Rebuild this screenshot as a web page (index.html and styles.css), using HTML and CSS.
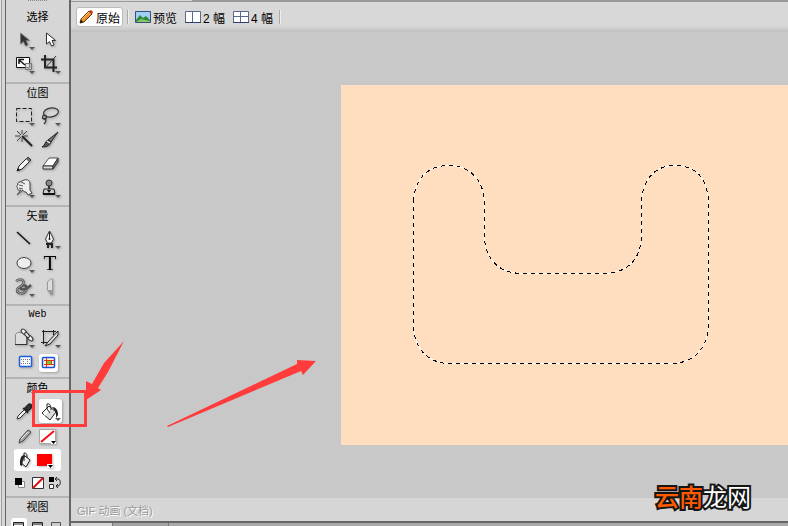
FILE: index.html
```
<!DOCTYPE html>
<html lang="zh">
<head>
    <meta charset="UTF-8">
    <meta name="viewport" content="width=device-width, initial-scale=1.0">
    <title>GIF 动画 (文档)</title>
    <link rel="stylesheet" href="styles.css">
</head>
<body>
    <div class="app">
        <!-- 工具面板 -->
        <aside class="palette">
            <div class="grip"></div>

            <section class="group">
                <h2>选择</h2>
                <div class="tools">
                    <button class="tool flyout" aria-label="指针"><svg viewBox="0 0 26 24"><path d="M9.500 5v11l3-2.500 2 4.500 2.500-1-2-4.500h3.500z" fill="#333" stroke="#777" stroke-width=".6"/></svg></button>
                    <button class="tool" aria-label="部分选定"><svg viewBox="0 0 26 24"><path d="M9.500 5v11l3-2.500 2 4.500 2.500-1-2-4.500h3.500z" fill="#fff" stroke="#333"/></svg></button>
                    <button class="tool flyout" aria-label="缩放"><svg viewBox="0 0 26 24"><path d="M5.500 5.500h13v10h-13z" fill="#fff" stroke="#111"/><path d="M14.500 11.500h6v6h-6z" fill="#ccc" fill-opacity=".6" stroke="#777"/><path d="M8 8l6 5M8 12V7.500h5" fill="none" stroke="#111" stroke-width="1.500"/></svg></button>
                    <button class="tool flyout" aria-label="裁剪"><svg viewBox="0 0 26 24"><path d="M8 3v12.500h12M4 7.500h12.500V20" fill="none" stroke="#222" stroke-width="2"/><path d="M8 16L19 4" stroke="#333"/></svg></button>
                </div>
            </section>

            <section class="group">
                <h2>位图</h2>
                <div class="tools">
                    <button class="tool flyout" aria-label="选取框"><svg viewBox="0 0 26 24"><path d="M5.500 4.500h15v13h-15z" fill="none" stroke="#222" stroke-dasharray="4 2"/></svg></button>
                    <button class="tool flyout" aria-label="套索"><svg viewBox="0 0 26 24"><g fill="none" stroke="#333" stroke-width="1.200"><ellipse cx="14" cy="8.500" rx="7.500" ry="4.500" transform="rotate(-10 14 8.500)"/><circle cx="7.500" cy="13" r="2"/><path d="M7 14c3 1 2 4 0 6M5 14l4 2"/></g></svg></button>
                    <button class="tool" aria-label="魔术棒"><svg viewBox="0 0 26 24"><path d="M11 2v4M11 10v4M4 8h5M13 8h4M6 3l4 4M16 3l-4 4M6 13l4-4" stroke="#444"/><path d="M11 8l10 10" stroke="#222" stroke-width="2"/></svg></button>
                    <button class="tool" aria-label="刷子"><svg viewBox="0 0 26 24"><path d="M21 4l-7 10-3-2z" fill="#777" stroke="#222"/><path d="M11 12l3 2c-1 4-5 5-9 5 3-1 3-6 6-7z" fill="#555" stroke="#222"/><path d="M10 13l3 2" stroke="#eee" stroke-width="1.500"/></svg></button>
                    <button class="tool" aria-label="铅笔"><svg viewBox="0 0 26 24"><path d="M6 19l2-5 9-9 3 3-9 9z" fill="#f4f4f4" stroke="#222"/><path d="M15 7l3 3 2-2-3-3z" fill="#666"/><path d="M6 19l1-3 2 2z" fill="#111"/></svg></button>
                    <button class="tool" aria-label="橡皮擦"><svg viewBox="0 0 26 24"><path d="M6 14l6-8h9l-5 8z" fill="#fff" stroke="#555"/><path d="M6 14h10v3H6z" fill="#ddd" stroke="#333"/><path d="M16 14l5-8v4l-5 7z" fill="#777" stroke="#333"/></svg></button>
                    <button class="tool flyout" aria-label="涂抹"><svg viewBox="0 0 26 24"><path d="M6 19l4-5c-3 1-4-1-3-2-2-1-1-3 0-3-1-2 0-3 2-3l4-2c4-1 6 1 6 4v6l2 3-4 2-2-3c-2 0-3-1-3-2z" fill="#eee" stroke="#444"/><path d="M8 9l4 1M8 12l4 1M10 6l4 2" stroke="#555"/></svg></button>
                    <button class="tool flyout" aria-label="橡皮图章"><svg viewBox="0 0 26 24"><circle cx="12" cy="7" r="3" fill="#888" stroke="#333"/><path d="M11 10h2v3h-2z" fill="#333"/><path d="M7 13h10l1 5H6z" fill="#ccc" stroke="#222"/><path d="M6 17h12v2H6z" fill="#111"/><path d="M10 14h4l-2 3z" fill="#111"/></svg></button>
                </div>
            </section>

            <section class="group">
                <h2>矢量</h2>
                <div class="tools">
                    <button class="tool" aria-label="直线"><svg viewBox="0 0 26 24"><path d="M6 5l13 12" stroke="#111" stroke-width="1.500"/></svg></button>
                    <button class="tool flyout" aria-label="钢笔"><svg viewBox="0 0 26 24"><path d="M12.500 4l4 8-2 4h-4l-2-4z" fill="#f2f2f2" stroke="#333"/><path d="M12.500 5v7" stroke="#222"/><circle cx="12.500" cy="12" r="1" fill="#222"/><path d="M9 16h7v2H9zM10 18h2v3h-2zM14 18h2v3h-2z" fill="#222"/></svg></button>
                    <button class="tool flyout" aria-label="椭圆"><svg viewBox="0 0 26 24"><ellipse cx="13" cy="12" rx="7" ry="5.500" fill="#eee" stroke="#444"/></svg></button>
                    <button class="tool letter" aria-label="文本">T</button>
                    <button class="tool flyout" aria-label="自由变形"><svg viewBox="0 0 26 24"><g fill="none" stroke="#555" stroke-width="2.500"><path d="M5 6c5-3 9-1 7 3-1 3-6 3-6 6 0 4 7 5 9 0s-3-6-5-3 4 4 10-2"/></g><path d="M5 6c5-3 9-1 7 3-1 3-6 3-6 6 0 4 7 5 9 0" fill="none" stroke="#bbb" stroke-width=".8"/></svg></button>
                    <button class="tool" aria-label="刀子" disabled><svg viewBox="0 0 26 24"><path d="M10.500 15V7l3-3h2v12h-4z" fill="#ddd" stroke="#999"/><path d="M11 15h5v5h-3z" fill="#999"/></svg></button>
                </div>
            </section>

            <section class="group web">
                <h2 class="latin">Web</h2>
                <div class="tools">
                    <button class="tool flyout" aria-label="热点"><svg viewBox="0 0 26 24"><path d="M4.500 8.500l2-2h9v12h-11z" fill="#ddd" stroke="#888"/><path d="M4 18.500h12V11" fill="none" stroke="#333"/><g fill="#eee" stroke="#333"><ellipse cx="13" cy="6" rx="3.500" ry="2" transform="rotate(45 13 6)"/><ellipse cx="19" cy="12" rx="3.500" ry="2" transform="rotate(45 19 12)"/><ellipse cx="16" cy="9" rx="3" ry="1.500" transform="rotate(45 16 9)"/></g></svg></button>
                    <button class="tool flyout" aria-label="切片"><svg viewBox="0 0 26 24"><path d="M5 5.500h14M6.500 4v14M4 16.500h10M16.500 4v5" fill="none" stroke="#222"/><path d="M21 5L11 16l-3 4 5-2 8-9z" fill="#ddd" stroke="#222"/></svg></button>
                    <button class="tool" aria-label="隐藏切片"><svg viewBox="0 0 26 24"><rect x="8.500" y="6.500" width="12" height="10" rx="1" fill="#fff" stroke="#1c5fe0" stroke-width="1.500"/><path d="M10 9.500h9M10 13.500h9M12.500 9v5M16.500 9v5" stroke="#777" stroke-dasharray="1 1"/></svg></button>
                    <button class="tool chosen" aria-label="显示切片"><svg viewBox="0 0 26 24"><rect x="5.500" y="7.500" width="12" height="10" rx="1" fill="#fff4d8" stroke="#1650e0" stroke-width="1.500"/><path d="M7 10.500h10M7 14.500h10M9.500 8v9M14.500 10v5" stroke="#e8340c"/><path d="M10 11h4v3h-4z" fill="#6ecb3c"/></svg></button>
                </div>
            </section>

            <section class="group colors">
                <h2>颜色</h2>
                <div class="tools">
                    <button class="tool" aria-label="滴管"><svg viewBox="0 0 26 24"><path d="M6 19l1-3 7-7 2 2-7 7z" fill="#eee" stroke="#333"/><path d="M12 8l5 5M14 8l3-3c2-2 5 0 3 3l-3 3z" fill="#333" stroke="#222" stroke-width="1.500"/></svg></button>
                    <button class="tool flyout picked" aria-label="油漆桶"><svg viewBox="0 0 26 24"><path d="M5 13l7-7 7 6-6 8z" fill="#ddd" stroke="#222"/><path d="M6 13l6-6 2 2-6 7z" fill="#fff"/><path d="M10 4v5l3 4M10 4c3-1 4 2 4 6" fill="none" stroke="#222"/><path d="M15 7c4 0 6 3 6 8l-2 3v-6z" fill="#222"/></svg></button>
                    <button class="tool" aria-label="笔触"><svg viewBox="0 0 26 24"><path d="M8 18l1-4 8-9 3 2-8 9z" fill="#aaa" stroke="#444"/><path d="M10 14l7-7" stroke="#eee"/></svg></button>
                    <button class="tool" aria-label="笔触颜色"><svg viewBox="0 0 26 24"><path d="M2.500 4.500h16v14h-16z" fill="#fff" stroke="#aaa"/><path d="M4 17L17 6" stroke="#f01010" stroke-width="2"/><path d="M14 16h5v3h-5z" fill="#fff"/><path d="M14 16h5l-2.500 3z"/></svg></button>
                </div>
                <div class="tools fill">
                    <button class="tool" aria-label="填充"><svg viewBox="0 0 26 24"><path d="M9 13l5-6 5 4-4 7z" fill="#eee" stroke="#222"/><path d="M13 4v8M13 4c3 0 3 2 3 5" fill="none" stroke="#222"/><path d="M14 6c-4 0-5 3-5 10l2 1 1-6z" fill="#222"/></svg></button>
                    <button class="tool" aria-label="填充颜色"><svg viewBox="0 0 26 24"><path d="M3 5h15v12H3z" fill="#f00"/><path d="M13 15h6v4h-6z" fill="#fff"/><path d="M14 16h5l-2.500 3z"/></svg></button>
                </div>
                <div class="minis">
                    <button aria-label="默认颜色"><svg viewBox="0 0 12 12"><path d="M4.500 4.500h6v6h-6z" fill="#fff" stroke="#888"/><path d="M1 1h7v7H1z"/></svg></button>
                    <button aria-label="无颜色"><svg viewBox="0 0 12 12"><path d="M.5 .5h11v11H.5z" fill="#fff" stroke="#333"/><path d="M1 11L11 1" stroke="#e01010" stroke-width="2"/></svg></button>
                    <button aria-label="交换颜色"><svg viewBox="0 0 12 12"><path d="M0 0h5v5H0z"/><path d="M.5 7.500h4v4h-4z" fill="#fff" stroke="#333"/><path d="M7 2h2c3 0 3 7 0 7H7M8 0L6 2l2 2M9 7L7 9l2 2" fill="none" stroke="#222"/></svg></button>
                </div>
            </section>

            <section class="group">
                <h2>视图</h2>
                <div class="views">
                    <button class="on" aria-label="标准屏幕"><svg viewBox="0 0 16 16"><path d="M2.500 4.500h10v9h-10z" fill="#fff" stroke="#222"/><path d="M3 6h9M5 9.500h6" stroke="#222"/></svg></button>
                    <button aria-label="带菜单全屏"><svg viewBox="0 0 16 16"><path d="M2.500 4.500h10v9h-10z" fill="#ddd" stroke="#222"/><path d="M3 6h9" stroke="#222"/></svg></button>
                    <button aria-label="全屏"><svg viewBox="0 0 16 16"><path d="M3.500 4.500h9v9h-9z" fill="#ccc" stroke="#555"/></svg></button>
                </div>
            </section>
        </aside>

        <!-- 文档窗口 -->
        <main class="document">
            <div class="doc-edge"></div>
            <nav class="modes">
                <button class="mode active"><svg viewBox="0 0 16 16"><path d="M2 14l1-4 8-8 3 3-8 8z" fill="#f0902c" stroke="#5a3210"/><path d="M4 10l7-7" stroke="#ffd070"/><path d="M11 2l3 3 1-2-2-2z" fill="#c83030"/><path d="M2 14l1-3 2 2z"/></svg>原始</button>
                <span class="divider"></span>
                <button class="mode"><svg viewBox="0 0 16 16"><path d="M.5 2.500h15v11H.5z" fill="#9fd0f5" stroke="#35507c"/><path d="M1 11l4-5 3 3 3-2 4 4v2H1z" fill="#2e8a3a"/><path d="M1 13l5-3 9 2v1z" fill="#85c86b"/></svg>预览</button>
                <button class="mode"><svg viewBox="0 0 16 16"><path d="M.5 2.500h15v11H.5z" fill="#fff" stroke="#5a688f"/><path d="M7.500 3v10" stroke="#5a688f"/><path d="M0 13.500h16" stroke="#2e3c70"/></svg>2 幅</button>
                <button class="mode"><svg viewBox="0 0 16 16"><path d="M.5 2.500h15v11H.5z" fill="#fff" stroke="#5a688f"/><path d="M7.500 3v10M1 7.500h14" stroke="#5a688f"/><path d="M0 13.500h16" stroke="#2e3c70"/></svg>4 幅</button>
                <span class="divider"></span>
            </nav>

            <div class="workspace">
                <div class="artboard">
                    <!-- 选区 -->
                    <svg class="selection" width="447" height="360" viewBox="0 0 447 360">
                        <path class="ants-base" d="M72.500 116C74 92 88 80.500 108 80.500S142 94 143.500 116V153C145 175 158 188.500 182 188.500H262C286 188.500 299 175 300.500 153V116C302 94 314 80.500 334 80.500S366 92 367.500 116V242C366 264 352 278.500 330 278.500H109C87 278.500 74 264 72.500 242Z"/>
                        <path class="ants" d="M72.500 116C74 92 88 80.500 108 80.500S142 94 143.500 116V153C145 175 158 188.500 182 188.500H262C286 188.500 299 175 300.500 153V116C302 94 314 80.500 334 80.500S366 92 367.500 116V242C366 264 352 278.500 330 278.500H109C87 278.500 74 264 72.500 242Z"/>
                    </svg>
                </div>
            </div>

            <footer class="status">GIF 动画 (文档)</footer>
            <div class="panel-tabs"><span class="tab"></span><span class="tab"></span></div>
        </main>
    </div>

    <!-- 标注 -->
    <div class="mark-box"></div>
    <svg class="mark-arrow" width="330" height="440" viewBox="0 0 330 440">
        <path d="M124 341L104 363 92 384 86 381V400L101 390 98 388 108 372Z"/>
        <path d="M167 426L297 364 297 360 316 361 303 375 301 371 168 427Z"/>
    </svg>
    <div class="watermark"><b>云南</b>龙网</div>
</body>
</html>
```

FILE: styles.css
```
* {
    box-sizing: border-box;
}

body {
    margin: 0;
    overflow: hidden;
    font-family: "Liberation Sans", "Noto Sans CJK SC", sans-serif;
    font-size: 11px;
    color: #000;
}

button {
    margin: 0;
    padding: 0;
    border: 0;
    background: none;
    font: inherit;
    color: inherit;
}

svg {
    display: block;
}

.app {
    display: flex;
    height: 100vh;
    padding-left: 5px;
    background: #d6d6d6;
    box-shadow: inset 1px 0 #dfe3e8, inset 2px 0 #a0a0a0;
    overflow: hidden;
}

/* 工具面板 */
.palette {
    flex: none;
    width: 66px;
    border-left: 1px solid #666;
    border-right: 2px solid #666;
    background: #d6d6d6;
    overflow: hidden;
}

.grip {
    width: 20px;
    height: 7px;
    margin: 0 auto;
    background: repeating-linear-gradient(to right, #888 0 1px, transparent 1px 2px) top / 100% 1px no-repeat;
}

.group {
    padding-bottom: 6px;
}

.group + .group {
    padding-bottom: 5px;
    border-top: 2px solid #b4b4b4;
}

.group h2 {
    margin: 0;
    height: 21px;
    line-height: 21px;
    font-size: 11px;
    font-weight: normal;
    text-align: center;
}

.group + .group h2 {
    height: 20px;
    line-height: 18px;
}

.group h2.latin {
    font-family: "Liberation Mono", monospace;
    font-size: 10px;
}

.group.web {
    padding-bottom: 3px;
}

.tools {
    display: grid;
    grid-template-columns: 26px 26px;
    grid-auto-rows: 24px;
    padding-left: 5px;
}

.tool {
    position: relative;
    filter: drop-shadow(1px 1px 1px rgba(0, 0, 0, 0.25));
}

.tool svg {
    position: relative;
    width: 26px;
    height: 24px;
}

.flyout::after {
    content: '';
    position: absolute;
    left: 18px;
    top: 19px;
    border: 3px solid transparent;
    border-top-color: #555;
    border-bottom: 0;
}

.letter {
    font-family: "Liberation Serif", serif;
    font-size: 21px;
    line-height: 24px;
}

.chosen::before,
.picked::before {
    content: '';
    position: absolute;
    left: 2px;
    top: 4px;
    width: 19px;
    height: 18px;
    border-radius: 3px;
    background: #fff;
}

.picked::before {
    top: 0;
    width: 23px;
    height: 24px;
}

.colors .tools {
    grid-auto-rows: 25px;
}

.colors .fill {
    margin: 0 8px;
    padding: 0;
    grid-template-columns: 23px 23px;
    grid-auto-rows: 22px;
    margin-bottom: 3px;
    border-radius: 3px;
    background: #fff;
}

.fill .tool svg {
    margin-left: -3px;
}

.minis {
    display: flex;
    justify-content: space-between;
    height: 17px;
    padding: 1px 8px;
}

.minis svg {
    width: 12px;
    height: 12px;
}

.views {
    display: flex;
    justify-content: space-between;
    padding: 0 5px;
}

.views svg {
    width: 16px;
    height: 16px;
}

.views .on {
    border-radius: 3px;
    background: #fff;
}

/* 文档窗口 */
.document {
    flex: 1;
    min-width: 0;
    display: flex;
    flex-direction: column;
    background: #c8c8c8;
}

.doc-edge {
    height: 2px;
    background: linear-gradient(to right, #d6d6d6 121px, #999 121px);
    border-bottom: 1px solid #999;
}

.modes {
    display: flex;
    align-items: center;
    gap: 4px;
    height: 30px;
    padding-left: 5px;
    font-size: 12px;
    background: linear-gradient(#d8d8d8 24px, #c0c0c0);
}

.mode {
    display: flex;
    align-items: center;
    gap: 2px;
    height: 20px;
    padding: 0 2px;
    white-space: nowrap;
}

.mode svg {
    width: 16px;
    height: 16px;
}

.mode.active {
    padding: 0 2px 0 1px;
    border: 1px solid #bbb;
    border-radius: 3px;
    background: #fff;
}

.divider {
    width: 2px;
    height: 14px;
    border-left: 1px solid #aaa;
    border-right: 1px solid #eee;
}

.workspace {
    flex: 1;
    min-height: 0;
    display: flex;
    align-items: center;
    padding-left: 270px;
}

.artboard {
    flex: 1;
    min-width: 0;
    height: 360px;
    background: #ffdec0;
    overflow: hidden;
}

.ants-base,
.ants {
    fill: none;
    stroke: #fff;
    shape-rendering: crispEdges;
}

.ants {
    stroke: #000;
    stroke-dasharray: 4 4;
}

.status {
    height: 23px;
    padding-left: 6px;
    line-height: 26px;
    background: #d6d6d6;
    color: #999;
    text-shadow: 1px 1px 0 #fff;
}

.panel-tabs {
    display: flex;
    height: 5px;
    border-top: 2px solid #666;
    background: #aaa;
}

.tab {
    width: 56px;
    border-right: 1px solid #777;
    background: #a4a4a4;
}

.tab:first-child {
    width: 42px;
    background: #d6d6d6;
}

/* 标注 */
.mark-box {
    position: absolute;
    left: 32px;
    top: 390px;
    width: 55px;
    height: 37px;
    border: 3px solid #ff3b3b;
}

.mark-arrow {
    position: absolute;
    left: 0;
    top: 0;
    fill: #ff3b3b;
    pointer-events: none;
}

.watermark {
    position: absolute;
    left: 655px;
    top: 484px;
    font-size: 24px;
    line-height: 28px;
    color: #fff;
    -webkit-text-stroke: 4px #151515;
    paint-order: stroke fill;
}

.watermark b {
    font-weight: 500;
    color: #ff5a00;
}
```
